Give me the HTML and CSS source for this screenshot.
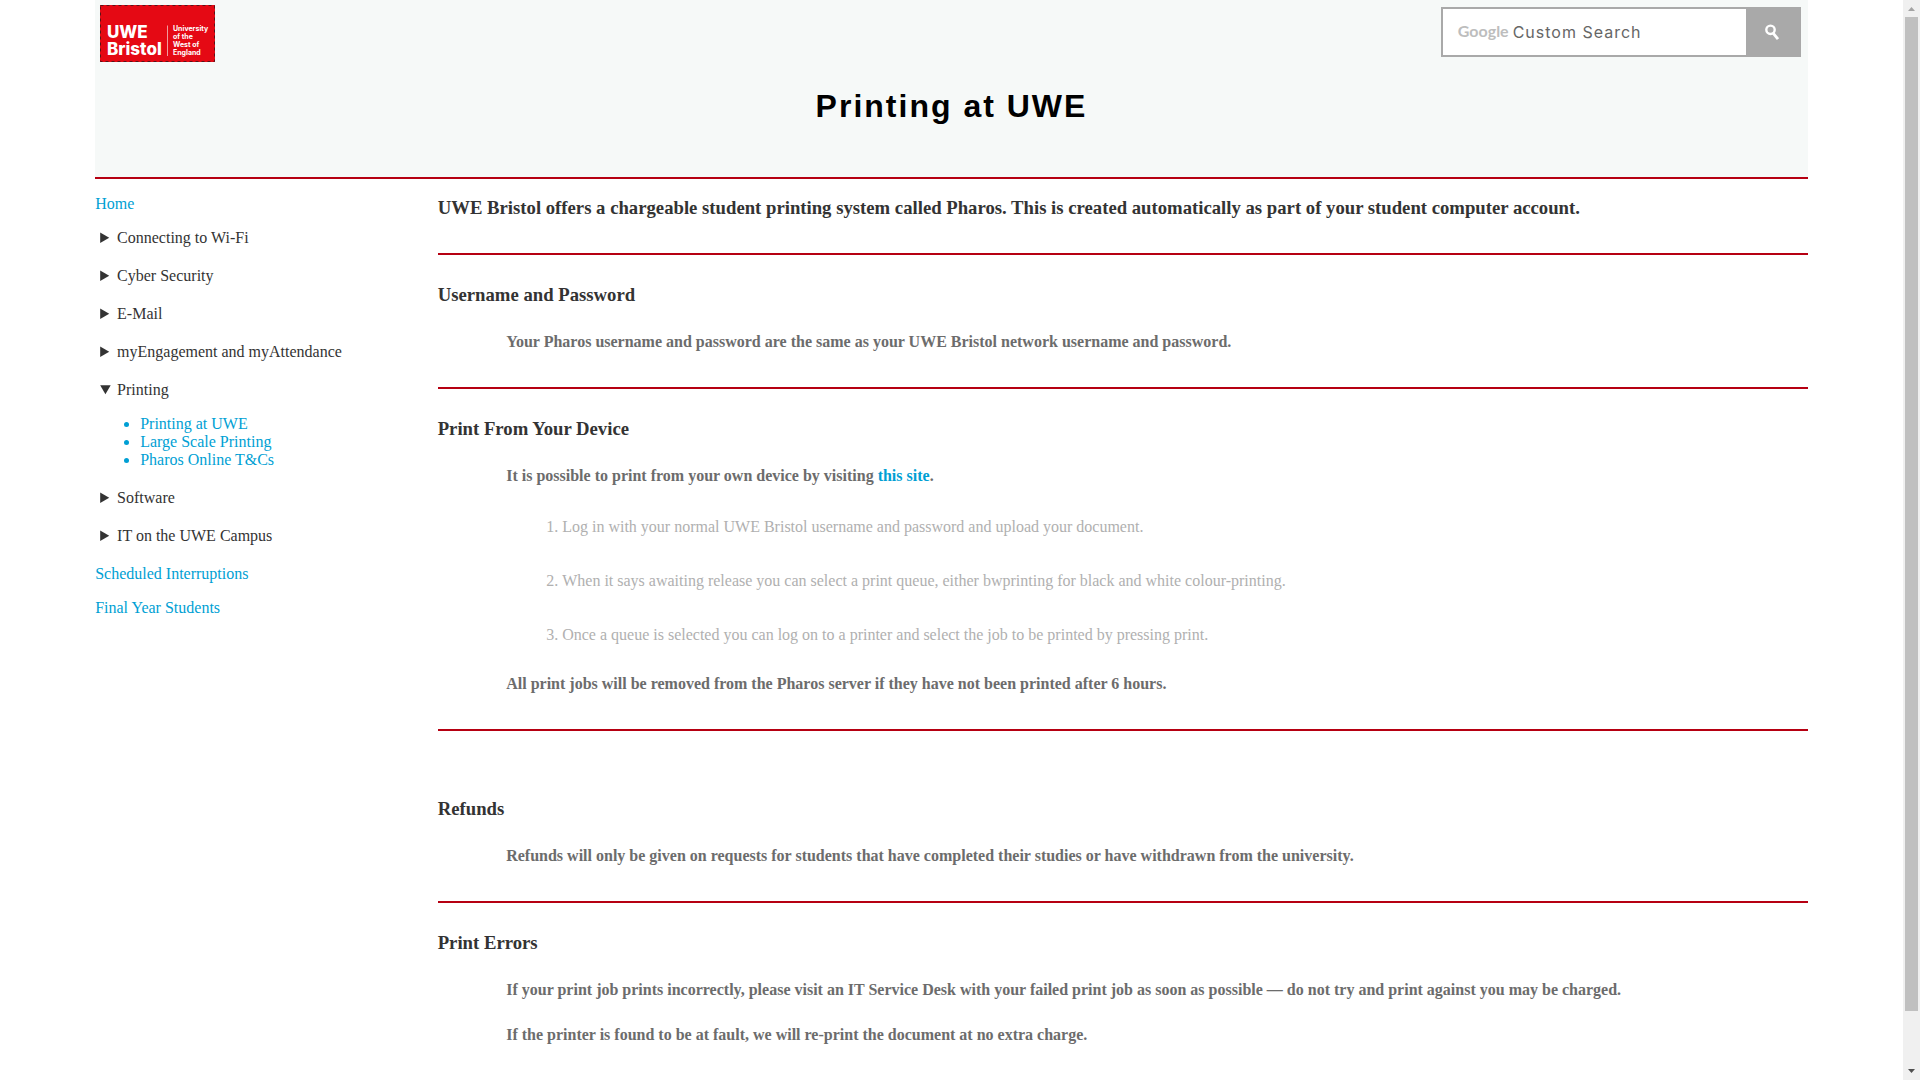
FILE: index.html
```html
<!DOCTYPE html>
<html lang="en">
<head>
<meta charset="utf-8">
<meta name="viewport" content="width=device-width, initial-scale=1">
<title>Printing at UWE</title>
<link rel="stylesheet" href="styles.css">
</head>
<body>
<div class="page">
  <div class="wrap">
  <header class="banner">
    <div class="topbar">
      <a class="logo" href="#" aria-label="UWE Bristol home">
        <svg width="115" height="57" viewBox="0 0 115 57">
          <rect width="115" height="57" fill="#e50914"/>
          <rect x=".5" y=".5" width="114" height="56" fill="none" stroke="#5a1418" stroke-dasharray="3 3"/>
          <g fill="#fff" font-family="Inter, sans-serif">
            <text x="7" y="33" font-size="17" font-weight="800">UWE</text>
            <text x="7" y="50" font-size="17" font-weight="800">Bristol</text>
            <g font-size="7" font-weight="700">
              <text x="73" y="26">University</text>
              <text x="73" y="34">of the</text>
              <text x="73" y="42">West of</text>
              <text x="73" y="50">England</text>
            </g>
          </g>
          <path d="M67.500 20.500V51" stroke="#f29a9d"/>
        </svg>
      </a>
      <form class="search" role="search">
        <label class="search-brand" for="q">Google</label>
        <input class="search-input" id="q" type="text" placeholder="Custom Search">
        <button class="search-button" type="submit" aria-label="Search">
          <svg width="16" height="18" viewBox="0 0 16 18" fill="none" stroke="#fff">
            <circle cx="6.500" cy="6.800" r="4.200" stroke-width="2.400"/>
            <path d="M9.300 10.300L14 16.200" stroke-width="2.800"/>
          </svg>
        </button>
      </form>
    </div>
    <h1 class="title">Printing at UWE</h1>
  </header>

  <div class="columns">
    <nav class="menu">
      <p class="menu-link"><a href="#">Home</a></p>
      <details><summary>Connecting to Wi-Fi</summary></details>
      <details><summary>Cyber Security</summary></details>
      <details><summary>E-Mail</summary></details>
      <details><summary>myEngagement and myAttendance</summary></details>
      <details open>
        <summary>Printing</summary>
        <ul>
          <li><a href="#">Printing at UWE</a></li>
          <li><a href="#">Large Scale Printing</a></li>
          <li><a href="#">Pharos Online T&amp;Cs</a></li>
        </ul>
      </details>
      <details><summary>Software</summary></details>
      <details><summary>IT on the UWE Campus</summary></details>
      <p class="menu-link"><a href="#">Scheduled Interruptions</a></p>
      <p class="menu-link"><a href="#">Final Year Students</a></p>
    </nav>

    <main class="content">
      <section class="intro">
        <h3>UWE Bristol offers a chargeable student printing system called Pharos. This is created automatically as part of your student computer account.</h3>
      </section>
      <section>
        <h3>Username and Password</h3>
        <h4>Your Pharos username and password are the same as your UWE Bristol network username and password.</h4>
      </section>
      <section>
        <h3>Print From Your Device</h3>
        <h4>It is possible to print from your own device by visiting <a href="#">this site</a>.</h4>
        <ol class="steps">
          <li>Log in with your normal UWE Bristol username and password and upload your document.</li>
          <li>When it says awaiting release you can select a print queue, either bwprinting for black and white colour-printing.</li>
          <li>Once a queue is selected you can log on to a printer and select the job to be printed by pressing print.</li>
        </ol>
        <h4>All print jobs will be removed from the Pharos server if they have not been printed after 6 hours.</h4>
      </section>
      <section class="spaced">
        <h3>Refunds</h3>
        <h4>Refunds will only be given on requests for students that have completed their studies or have withdrawn from the university.</h4>
      </section>
      <section>
        <h3>Print Errors</h3>
        <h4>If your print job prints incorrectly, please visit an IT Service Desk with your failed print job as soon as possible — do not try and print against you may be charged.</h4>
        <h4>If the printer is found to be at fault, we will re-print the document at no extra charge.</h4>
      </section>
    </main>
  </div>
  </div>
</div>
<div class="scrollbar" aria-hidden="true">
  <svg width="17" height="17" viewBox="0 0 17 17"><path d="M5 11L8.500 7L12 11Z" fill="#a3a3a3"/></svg>
  <div class="track"><div class="thumb"></div></div>
  <svg width="17" height="17" viewBox="0 0 17 17"><path d="M5 6L8.500 10L12 6Z" fill="#505050"/></svg>
</div>
</body>
</html>
```
FILE: styles.css
```css
* {
  box-sizing: border-box;
}

body {
  display: flex;
  height: 100vh;
  margin: 0;
  background: #fff;
  color: #333;
  font: 16px/18px "Liberation Serif", "Times New Roman", serif;
}

a {
  color: #009fd4;
  text-decoration: none;
}

.page {
  flex: 1;
  min-width: 0;
  overflow-y: auto;
  scrollbar-width: none;
}

.wrap {
  width: 90%;
  margin: 0 auto;
}

/* Header */
.banner {
  padding-bottom: 52px;
  border-bottom: 2px solid #b60012;
  background: #f6f9f8;
}

.topbar {
  display: flex;
  justify-content: space-between;
  align-items: flex-start;
  padding: 5px 7px 0 5px;
}

.logo svg {
  display: block;
}

.search {
  display: flex;
  align-items: center;
  width: 360px;
  height: 50px;
  margin-top: 2px;
  border: 2px solid #a9a9a9;
  background: #fff;
}

.search-brand {
  padding: 0 4px 2px 15px;
  color: #bdbdbd;
  font: bold 16px/20px Lato, sans-serif;
}

.search-input {
  flex: 1;
  min-width: 0;
  height: 100%;
  padding: 0;
  border: 0;
  outline: 0;
  background: none;
  font: 16px/20px Inter, sans-serif;
  letter-spacing: 1px;
}

.search-input::placeholder {
  color: #666;
  opacity: 1;
}

.search-button {
  display: flex;
  align-items: center;
  justify-content: center;
  width: 53px;
  height: 100%;
  padding: 0;
  border: 0;
  background: #a9a9a9;
}

.title {
  margin: 0;
  padding-top: 25px;
  color: #000;
  font: bold 32px/38px "Liberation Sans", Arial, sans-serif;
  letter-spacing: 2px;
  text-align: center;
}

/* Columns */
.columns {
  display: grid;
  grid-template-columns: 1fr 4fr;
}

/* Side menu */
.menu {
  padding-top: 16px;
}

.menu-link {
  margin: 0 0 16px;
}

.menu details {
  margin-bottom: 20px;
}

.menu summary {
  padding-left: 5px;
}

.menu ul {
  margin: 16px 0 0;
  padding-left: 45px;
}

.menu li {
  color: #009fd4;
}

/* Content */
.content section {
  padding: 29px 0 36px;
  border-bottom: 2px solid #b60012;
}

.content section:last-child {
  border-bottom: 0;
}

.content .intro {
  padding: 18px 0 34px;
}

.content .spaced {
  padding-top: 67px;
}

.content h3 {
  margin: 0;
  line-height: 22px;
}

.content h4 {
  margin: 27px 0 0 5%;
  color: #6c6c6c;
}

.steps {
  margin: 33px 0 31px 5%;
  padding-left: 40px;
  color: #b0b0b0;
  list-style-position: inside;
}

.steps + h4 {
  margin-top: 31px;
}

.steps li + li {
  margin-top: 36px;
}

/* Scrollbar */
.scrollbar {
  display: flex;
  flex-direction: column;
  width: 17px;
  background: #f0f0f0;
}

.track {
  flex: 1;
  padding: 0 2px;
}

.thumb {
  height: 95%;
  background: #c0c0c0;
}
```
